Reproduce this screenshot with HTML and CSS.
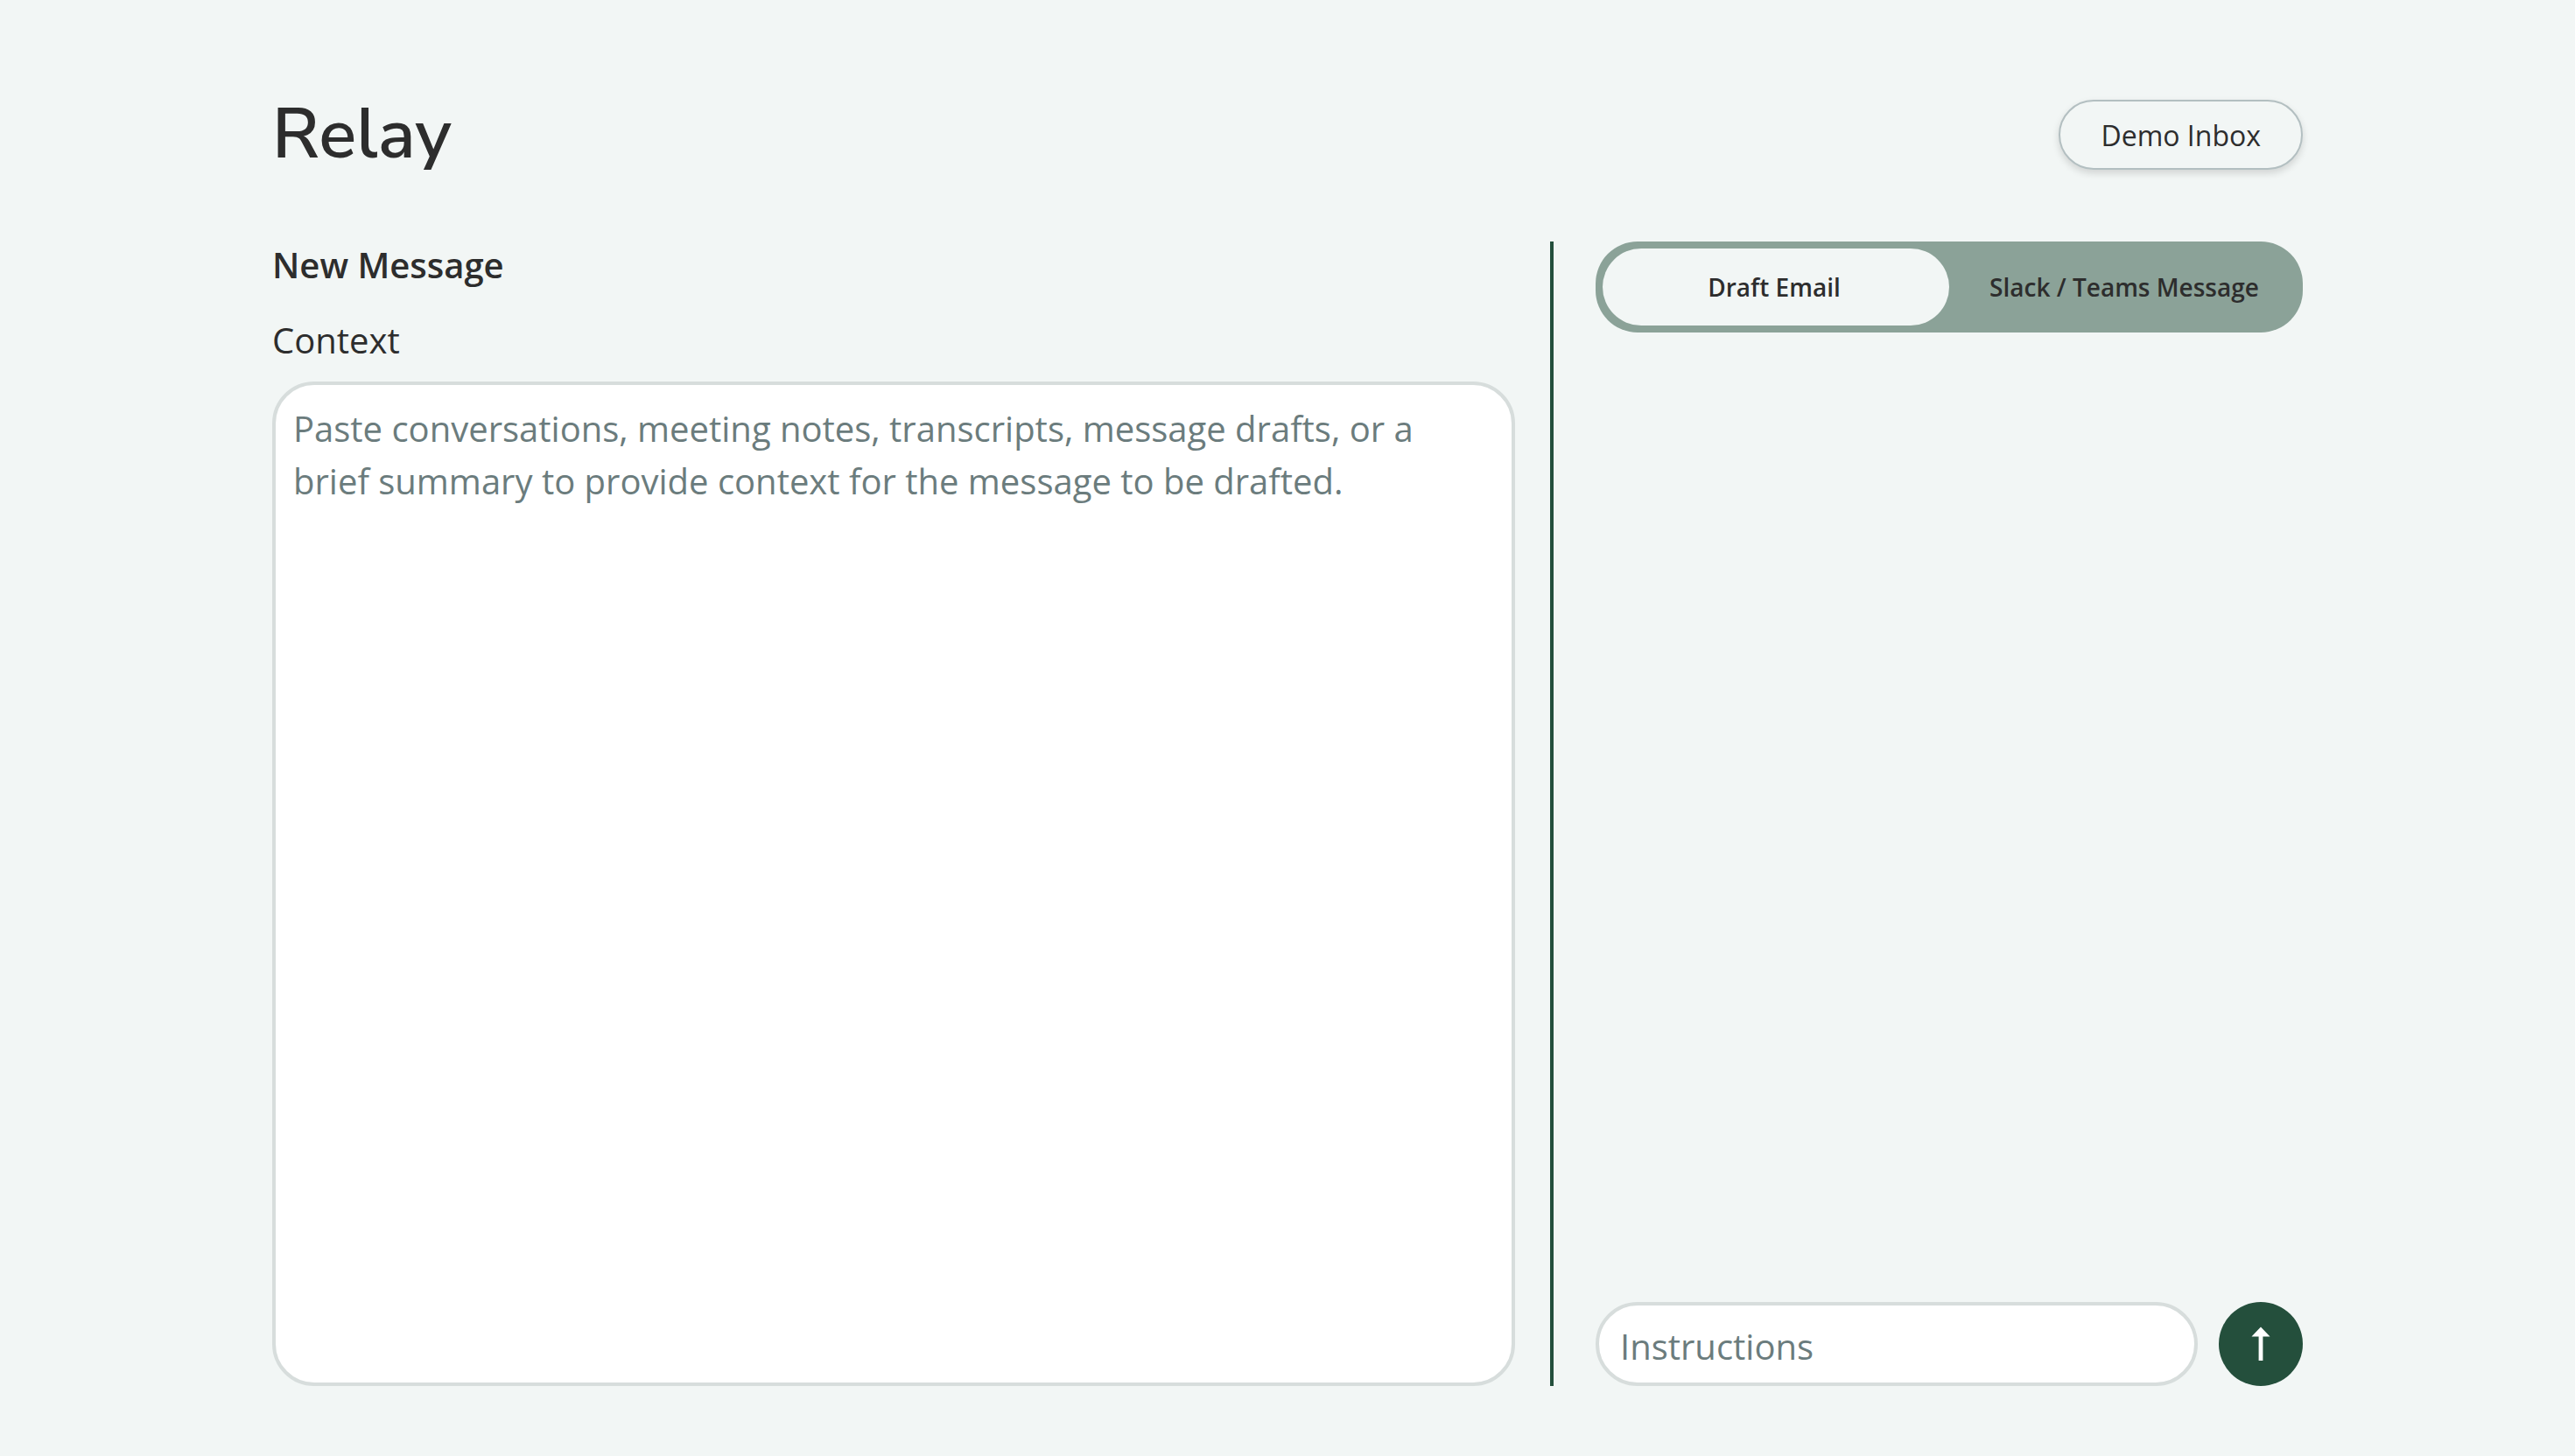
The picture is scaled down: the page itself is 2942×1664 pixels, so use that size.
FILE: index.html
```html
<!DOCTYPE html>
<html lang="en">
<head>
  <meta charset="utf-8">
  <meta name="viewport" content="width=device-width, initial-scale=1">
  <title>Relay</title>
  <link rel="stylesheet" href="styles.css">
</head>
<body>
  <div class="app">
    <header class="header">
      <h1 class="brand">Relay</h1>
      <button type="button" class="inbox-button">Demo Inbox</button>
    </header>
    <main class="workspace">
      <section class="compose">
        <h2 class="compose-title">New Message</h2>
        <label class="compose-label" for="context">Context</label>
        <textarea class="field context" id="context" placeholder="Paste conversations, meeting notes, transcripts, message drafts, or a brief summary to provide context for the message to be drafted."></textarea>
      </section>
      <section class="output">
        <div class="tabs" role="tablist" aria-label="Message type">
          <button type="button" class="tab tab-active" role="tab" aria-selected="true">Draft Email</button>
          <button type="button" class="tab" role="tab" aria-selected="false">Slack / Teams Message</button>
        </div>
        <form class="prompt">
          <input class="field instructions" type="text" placeholder="Instructions" aria-label="Instructions">
          <button type="submit" class="send" aria-label="Send">
            <svg class="send-icon" viewBox="0 0 24 40" aria-hidden="true">
              <path d="M12 0.5 L22.5 11.5 H14.4 V39 H9.6 V11.5 H1.5 Z" fill="currentColor"/>
            </svg>
          </button>
        </form>
      </section>
    </main>
  </div>
</body>
</html>
```

FILE: styles.css
```css
* {
  box-sizing: border-box;
}

body {
  margin: 0;
  background: #f2f6f5;
  color: #2d2d2d;
  font-family: "Open Sans", sans-serif;
  font-size: 40px;
}

button,
input,
textarea {
  margin: 0;
  color: inherit;
  font-family: inherit;
}

button {
  cursor: pointer;
}

.app {
  display: flex;
  flex-direction: column;
  gap: 48px;
  max-width: 2400px;
  min-height: 100vh;
  margin: 0 auto;
  padding: 80px 40px;
}

.header {
  display: flex;
  align-items: center;
  justify-content: space-between;
  padding: 20px 0;
}

.brand {
  margin: 0;
  font-family: "Nunito Sans", Nunito, Lato, sans-serif;
  font-size: 80px;
  font-weight: 600;
  line-height: 108px;
}

.inbox-button {
  height: 80px;
  padding: 0 46px;
  border: 2px solid #b3bfc1;
  border-radius: 40px;
  background: #f2f6f5;
  box-shadow: 0 4px 8px rgba(0, 0, 0, 0.14);
  font-size: 32px;
}

.workspace {
  display: grid;
  flex: 1;
  grid-template-columns: minmax(0, 1460fr) minmax(0, 860fr);
}

.compose {
  display: flex;
  flex-direction: column;
  padding-right: 40px;
}

.compose-title {
  margin: 0 0 32px;
  font-size: 40px;
  font-weight: 600;
  line-height: 54px;
}

.compose-label {
  margin-bottom: 20px;
  line-height: 54px;
}

.field {
  border: 4px solid #d7dddc;
  border-radius: 48px;
  background: #fff;
  font-size: 40px;
  outline: none;
}

.field::placeholder {
  color: #6b7c7d;
  opacity: 1;
}

.context {
  flex: 1;
  width: 100%;
  padding: 20px;
  line-height: 60px;
  resize: none;
}

.output {
  display: flex;
  flex-direction: column;
  justify-content: space-between;
  padding-left: 48px;
  border-left: 4px solid #244f3c;
}

.tabs {
  display: grid;
  grid-template-columns: 1fr 1fr;
  padding: 8px;
  border-radius: 48px;
  background: #8ba298;
}

.tab {
  height: 88px;
  padding: 0;
  border: 0;
  border-radius: 44px;
  background: transparent;
  font-size: 28px;
  font-weight: 600;
}

.tab:first-child {
  padding-right: 4px;
}

.tab:last-child {
  padding-left: 4px;
}

.tab-active {
  background: #f2f6f5;
}

.prompt {
  display: flex;
  gap: 24px;
}

.instructions {
  flex: 1;
  min-width: 0;
  height: 96px;
  padding: 4px 24px 0;
}

.send {
  display: grid;
  place-items: center;
  width: 96px;
  height: 96px;
  padding: 0;
  border: 0;
  border-radius: 50%;
  background: #244f3c;
  color: #fff;
}

.send-icon {
  width: 24px;
  height: 40px;
}
```
